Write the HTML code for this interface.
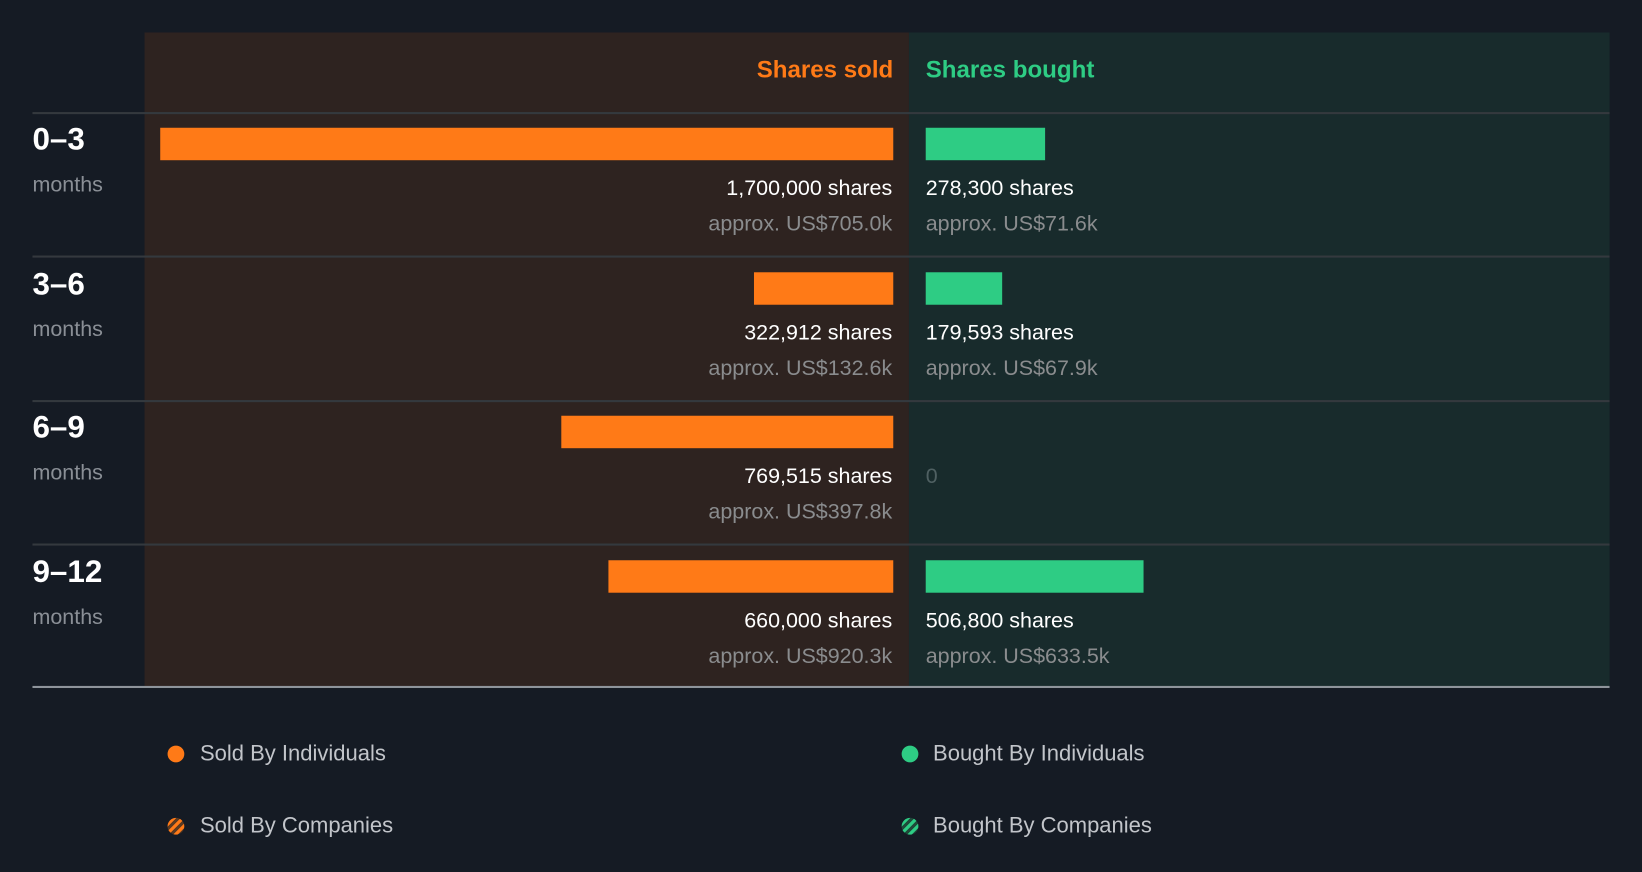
<!DOCTYPE html>
<html><head><meta charset="utf-8"><style>
html,body{margin:0;padding:0;background:#151b24;width:1642px;height:872px;overflow:hidden}
#w{position:absolute;left:0;top:0;width:1568px;height:833px;transform:scale(1.0472);transform-origin:0 0;font-family:"Liberation Sans",sans-serif}
.a{position:absolute}
.sold{background:#2e2320}.bought{background:#182b2c}
.line{position:absolute;left:31px;width:1506px;height:2px;background:#34393e}
.ob{position:absolute;background:#ff7a17;height:31px}
.gb{position:absolute;background:#2ecc84;height:31px;left:884px}
.sr{position:absolute;right:716px;color:#fff;font-size:20.5px;white-space:nowrap}
.sl{position:absolute;left:884px;color:#fff;font-size:20.5px;white-space:nowrap}
.ar{position:absolute;right:716px;color:#8a8c8e;font-size:20.5px;white-space:nowrap}
.al{position:absolute;left:884px;color:#8a8c8e;font-size:20.5px;white-space:nowrap}
.lb{position:absolute;left:31px;color:#fff;font-weight:bold;font-size:30px}
.mo{position:absolute;left:31px;color:#8a8f96;font-size:20.5px}
.lg{position:absolute;color:#c2c5ca;font-size:21px;white-space:nowrap}
.dot{position:absolute;width:16px;height:16px;border-radius:50%}
</style></head><body><div id="w">
<div class="a sold" style="left:138px;top:31px;width:730px;height:626px"></div>
<div class="a bought" style="left:868px;top:31px;width:669px;height:626px"></div>
<div class="a" style="right:715px;top:53px;color:#ff7a17;font-weight:bold;font-size:23px">Shares sold</div>
<div class="a" style="left:884px;top:53px;color:#2ecc84;font-weight:bold;font-size:23px">Shares bought</div>
<div class="line" style="top:107px"></div>
<div class="line" style="top:244px"></div>
<div class="line" style="top:382px"></div>
<div class="line" style="top:519px"></div>
<div class="line" style="top:655px;background:#8e949b"></div>

<div class="lb" style="top:117px">0–3</div><div class="mo" style="top:165px">months</div>
<div class="ob" style="left:153px;width:700px;top:122px"></div>
<div class="gb" style="width:114px;top:122px"></div>
<div class="sr" style="top:168px">1,700,000 shares</div><div class="sl" style="top:168px">278,300 shares</div>
<div class="ar" style="top:202px">approx. US$705.0k</div><div class="al" style="top:202px">approx. US$71.6k</div>

<div class="lb" style="top:255px">3–6</div><div class="mo" style="top:303px">months</div>
<div class="ob" style="left:720px;width:133px;top:260px"></div>
<div class="gb" style="width:73px;top:260px"></div>
<div class="sr" style="top:306px">322,912 shares</div><div class="sl" style="top:306px">179,593 shares</div>
<div class="ar" style="top:340px">approx. US$132.6k</div><div class="al" style="top:340px">approx. US$67.9k</div>

<div class="lb" style="top:392px">6–9</div><div class="mo" style="top:440px">months</div>
<div class="ob" style="left:536px;width:317px;top:397px"></div>
<div class="sr" style="top:443px">769,515 shares</div><div class="sl" style="top:443px;color:#4f6062">0</div>
<div class="ar" style="top:477px">approx. US$397.8k</div>

<div class="lb" style="top:530px">9–12</div><div class="mo" style="top:578px">months</div>
<div class="ob" style="left:581px;width:272px;top:535px"></div>
<div class="gb" style="width:208px;top:535px"></div>
<div class="sr" style="top:581px">660,000 shares</div><div class="sl" style="top:581px">506,800 shares</div>
<div class="ar" style="top:615px">approx. US$920.3k</div><div class="al" style="top:615px">approx. US$633.5k</div>

<div class="dot" style="left:160px;top:712px;background:#ff7a17"></div>
<div class="lg" style="left:191px;top:708px">Sold By Individuals</div>
<div class="dot" style="left:861px;top:712px;background:#2ecc84"></div>
<div class="lg" style="left:891px;top:708px">Bought By Individuals</div>
<div class="dot" style="left:160px;top:781px;background:repeating-linear-gradient(135deg,#5a3a22 0 3px,#ff7a17 3px 6px)"></div>
<div class="lg" style="left:191px;top:777px">Sold By Companies</div>
<div class="dot" style="left:861px;top:781px;background:repeating-linear-gradient(135deg,#1f4a3a 0 3px,#2ecc84 3px 6px)"></div>
<div class="lg" style="left:891px;top:777px">Bought By Companies</div>
</div></body></html>
